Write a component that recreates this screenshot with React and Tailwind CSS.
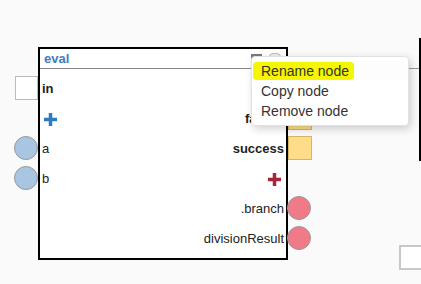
import React from 'react'

function Plus({ color }) {
    return (
        <svg width="13" height="13" viewBox="0 0 13 13">
            <rect x="0" y="4.75" width="13" height="3.5" fill={color} />
            <rect x="4.75" y="0" width="3.5" height="13" fill={color} />
        </svg>
    )
}

export default function App() {
    return (
        <div className="relative w-[421px] h-[284px] overflow-hidden bg-[#fafafa] font-['Liberation_Sans',Arial,sans-serif]">
            {/* neighbour nodes on the canvas */}
            <div className="absolute left-[288px] top-[68px] w-[131px] h-px bg-[#999]" />
            <div className="absolute left-[419px] top-[38px] w-[40px] h-[123px] border-2 border-black bg-white" />
            <div className="absolute left-[399px] top-[245px] w-[40px] h-[25px] border-2 border-[#c8c8c8] bg-white" />

            {/* eval node */}
            <div className="absolute left-[38px] top-[47px] w-[250px] h-[213px] border-2 border-black bg-white flex flex-col">
                <div className="h-[20px] border-b border-[#888] flex items-center justify-between pl-1 pr-[5px]">
                    <span className="text-[13px] font-bold text-[#3d7cc0] leading-none">eval</span>
                    <div className="flex items-center gap-[7px]">
                        <div className="w-[11px] h-[9px] bg-[#7a7a7a]" />
                        <div className="w-[12px] h-[11px] rounded-sm border border-[#bbb] bg-[#eee]" />
                    </div>
                </div>
                <div className="pt-[5px] grid grid-cols-2 text-[13px] text-[#222]">
                    {/* inputs */}
                    <div className="flex flex-col">
                        <div className="relative h-[30px] flex items-center pl-[2px] font-bold">
                            <div className="absolute -left-[25px] top-[2px] w-[23px] h-[24px] bg-white border border-[#bbb]" />
                            in
                        </div>
                        <div className="h-[30px] flex items-center pl-[4px]">
                            <Plus color="#2f7bc0" />
                        </div>
                        <div className="relative h-[30px] flex items-center pl-[2px]">
                            <div className="absolute -left-[26px] top-[2px] w-[24px] h-[24px] rounded-full bg-[#a8c6e2] border border-[#999]" />
                            a
                        </div>
                        <div className="relative h-[30px] flex items-center pl-[2px]">
                            <div className="absolute -left-[26px] top-[2px] w-[24px] h-[24px] rounded-full bg-[#a8c6e2] border border-[#999]" />
                            b
                        </div>
                    </div>
                    {/* outputs */}
                    <div className="flex flex-col items-stretch">
                        <div className="h-[30px]" />
                        <div className="relative h-[30px] flex items-center justify-end pr-[2px] font-bold">
                            failure
                            <div className="absolute -right-[26px] top-[2px] w-[24px] h-[24px] bg-[#ffdd88] border border-[#d6b466]" />
                        </div>
                        <div className="relative h-[30px] flex items-center justify-end pr-[2px] font-bold">
                            success
                            <div className="absolute -right-[26px] top-[2px] w-[24px] h-[24px] bg-[#ffdd88] border border-[#d6b466]" />
                        </div>
                        <div className="h-[30px] flex items-center justify-end pr-[5px]">
                            <Plus color="#a8263a" />
                        </div>
                        <div className="relative h-[30px] flex items-center justify-end pr-[2px]">
                            .branch
                            <div className="absolute -right-[25px] top-[2px] w-[24px] h-[24px] rounded-full bg-[#f07a88] border border-[#999]" />
                        </div>
                        <div className="relative h-[30px] flex items-center justify-end pr-[2px]">
                            divisionResult
                            <div className="absolute -right-[25px] top-[2px] w-[24px] h-[24px] rounded-full bg-[#f07a88] border border-[#999]" />
                        </div>
                    </div>
                </div>
            </div>

            {/* context menu */}
            <div className="absolute left-[251px] top-[56px] w-[158px] h-[70px] pt-[4px] bg-white rounded border border-[#e2e2e2] shadow-[2px_3px_8px_rgba(0,0,0,0.18)] text-[14px] text-[#333]">
                <div className="h-[20px] flex items-center bg-[#fdfdfd]">
                    <span className="ml-[1px] pl-[8px] pr-[5px] h-[18px] flex items-center bg-[#f6f600] rounded-sm">Rename node</span>
                </div>
                <div className="h-[20px] flex items-center pl-[9px]">Copy node</div>
                <div className="h-[20px] flex items-center pl-[9px]">Remove node</div>
            </div>
        </div>
    )
}
